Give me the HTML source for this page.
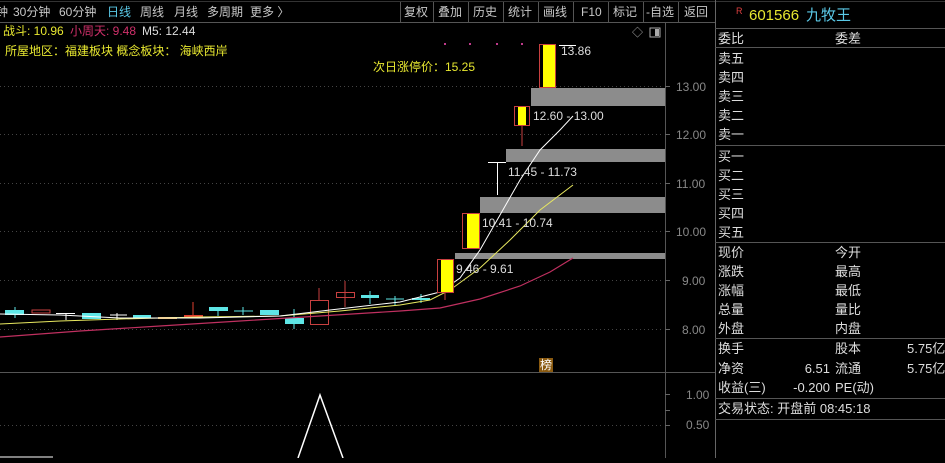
<!DOCTYPE html><html><head><meta charset="utf-8"><style>
body{margin:0;background:#000;width:945px;height:458px;overflow:hidden;font-family:"Liberation Sans","Noto Sans CJK SC",sans-serif;}
svg text{font-family:"Liberation Sans","Noto Sans CJK SC",sans-serif;}
</style></head><body>
<svg width="945" height="458" viewBox="0 0 945 458" xmlns="http://www.w3.org/2000/svg">
<rect width="945" height="458" fill="#000"/>
<g font-size="12" fill="#c8c8c8">
<text x="-4" y="16">钟</text><text x="13" y="16">30分钟</text><text x="59" y="16">60分钟</text>
<text x="107" y="16" fill="#5ac8e6">日线</text><text x="140" y="16">周线</text><text x="174" y="16">月线</text><text x="207" y="16">多周期</text><text x="250" y="16">更多 〉</text>
<text x="404" y="16">复权</text><text x="438" y="16">叠加</text><text x="473" y="16">历史</text><text x="508" y="16">统计</text><text x="543" y="16">画线</text><text x="581" y="16">F10</text><text x="613" y="16">标记</text><text x="646" y="16">-自选</text><text x="684" y="16">返回</text>
</g>
<g stroke="#555" stroke-width="1">
<line x1="400.5" y1="2" x2="400.5" y2="22"/><line x1="433.5" y1="2" x2="433.5" y2="22"/><line x1="468.5" y1="2" x2="468.5" y2="22"/><line x1="503.5" y1="2" x2="503.5" y2="22"/><line x1="538.5" y1="2" x2="538.5" y2="22"/><line x1="573.5" y1="2" x2="573.5" y2="22"/><line x1="608.5" y1="2" x2="608.5" y2="22"/><line x1="643.5" y1="2" x2="643.5" y2="22"/><line x1="678.5" y1="2" x2="678.5" y2="22"/>
<line x1="0" y1="1.5" x2="945" y2="1.5" stroke="#333"/>
<line x1="0" y1="22.5" x2="715" y2="22.5"/>
<line x1="665.5" y1="22" x2="665.5" y2="458"/>
<line x1="715.5" y1="0" x2="715.5" y2="458" stroke="#666"/>
<line x1="0" y1="372.5" x2="715" y2="372.5"/>
</g>
<text x="3" y="35" font-size="12" fill="#e8e830">战斗: 10.96</text>
<text x="70" y="35" font-size="12" fill="#d0306a">小周天: 9.48</text>
<text x="142" y="35" font-size="12" fill="#ddd">M5: 12.44</text>
<text x="5" y="55" font-size="12" fill="#e8e830">所屋地区：福建板块   概念板块：  海峡西岸</text>
<text x="373" y="71" font-size="12" fill="#e8e830">次日涨停价：15.25</text>
<text x="632" y="36" font-size="11" fill="#aaa">◇</text>
<rect x="650" y="28" width="10" height="9" fill="none" stroke="#aaa"/><rect x="655" y="29" width="4" height="7" fill="#aaa"/>
<g fill="#c03a8a"><rect x="444" y="43" width="2" height="2"/><rect x="469" y="43" width="2" height="2"/><rect x="496" y="43" width="2" height="2"/><rect x="521" y="43" width="2" height="2"/></g>
<g stroke="#444" stroke-dasharray="1,3">
<line x1="0" y1="86.5" x2="663" y2="86.5"/><line x1="0" y1="134.5" x2="663" y2="134.5"/><line x1="0" y1="183.5" x2="663" y2="183.5"/><line x1="0" y1="231.5" x2="663" y2="231.5"/><line x1="0" y1="280.5" x2="663" y2="280.5"/><line x1="0" y1="329.5" x2="663" y2="329.5"/><line x1="0" y1="425.5" x2="663" y2="425.5"/>
</g>
<g stroke="#666"><line x1="665" y1="86.5" x2="670" y2="86.5"/><line x1="665" y1="134.5" x2="670" y2="134.5"/><line x1="665" y1="183.5" x2="670" y2="183.5"/><line x1="665" y1="231.5" x2="670" y2="231.5"/><line x1="665" y1="280.5" x2="670" y2="280.5"/><line x1="665" y1="329.5" x2="670" y2="329.5"/><line x1="665" y1="394.5" x2="670" y2="394.5"/><line x1="665" y1="410.5" x2="670" y2="410.5"/><line x1="665" y1="425.5" x2="670" y2="425.5"/></g>
<g font-size="12" fill="#888">
<text x="676" y="91">13.00</text><text x="676" y="139">12.00</text><text x="676" y="188">11.00</text><text x="676" y="236">10.00</text><text x="682" y="285">9.00</text><text x="682" y="334">8.00</text><text x="686" y="399">1.00</text><text x="686" y="429">0.50</text>
</g>
<g fill="#8c8c8c"><rect x="531" y="88" width="134" height="18"/><rect x="506" y="149" width="159" height="13"/><rect x="480" y="197" width="185" height="16"/><rect x="455" y="253" width="210" height="6"/></g>
<g>
<rect x="5" y="310" width="19" height="5" fill="#5ee6e6"/><line x1="15" y1="307" x2="15" y2="318" stroke="#5ee6e6"/>
<rect x="32" y="310" width="18" height="3" fill="none" stroke="#c84040"/>
<rect x="56" y="313" width="19" height="1" fill="#fff"/><line x1="66" y1="313" x2="66" y2="320" stroke="#fff"/>
<rect x="82" y="313" width="19" height="6" fill="#5ee6e6"/>
<line x1="110" y1="315" x2="127" y2="315" stroke="#fff"/><line x1="117" y1="313" x2="117" y2="320" stroke="#fff"/>
<rect x="133" y="315" width="18" height="3" fill="#5ee6e6"/>
<rect x="158" y="317" width="19" height="2" fill="#e0a030"/>
<rect x="184" y="315" width="19" height="2" fill="#e04030"/><line x1="193" y1="302" x2="193" y2="315" stroke="#e04030"/>
<rect x="209" y="307" width="19" height="4" fill="#5ee6e6"/><line x1="218" y1="311" x2="218" y2="316" stroke="#5ee6e6"/>
<line x1="234" y1="311" x2="253" y2="311" stroke="#5ee6e6"/><line x1="243" y1="307" x2="243" y2="315" stroke="#5ee6e6"/>
<rect x="260" y="310" width="19" height="5" fill="#5ee6e6"/>
<rect x="285" y="318" width="19" height="6" fill="#5ee6e6"/><line x1="294" y1="309" x2="294" y2="329" stroke="#5ee6e6"/>
<rect x="310.5" y="300.5" width="18" height="24" fill="none" stroke="#c84040"/><line x1="319" y1="288" x2="319" y2="300" stroke="#c84040"/>
<rect x="336.5" y="292.5" width="18" height="5" fill="none" stroke="#c84040"/><line x1="345" y1="281" x2="345" y2="307" stroke="#c84040"/>
<rect x="361" y="295" width="18" height="3" fill="#5ee6e6"/><line x1="370" y1="291" x2="370" y2="304" stroke="#5ee6e6"/>
<line x1="386" y1="299" x2="404" y2="299" stroke="#5ee6e6"/><line x1="395" y1="296" x2="395" y2="305" stroke="#5ee6e6"/>
<rect x="412" y="298" width="18" height="2" fill="#5ee6e6"/><line x1="421" y1="294" x2="421" y2="303" stroke="#5ee6e6"/>
</g>
<polyline fill="none" stroke="#c03060" stroke-width="1.2" points="0,337 80,331 160,326 240,321 320,316 400,311 440,308 480,299 520,286 550,272 573,258"/>
<polyline fill="none" stroke="#e8e860" stroke-width="1" points="0,324 60,321 120,319 200,317 280,316 340,311 400,305 430,300 450,290 480,268 510,240 540,210 573,185"/>
<polyline fill="none" stroke="#fff" stroke-width="1" points="0,314 60,315 120,318 200,318 280,316 330,310 400,302 440,292 460,278 480,250 500,215 520,180 540,150 560,130 573,116"/>
<rect x="437.5" y="259.5" width="16" height="33" fill="#000" stroke="#c84040"/><rect x="441" y="260" width="12" height="32" fill="#ff0"/><line x1="445" y1="293" x2="445" y2="300" stroke="#c84040"/>
<rect x="462.5" y="213.5" width="17" height="35" fill="#000" stroke="#c84040"/><rect x="467" y="214" width="12" height="34" fill="#ff0"/>
<line x1="488" y1="162.5" x2="506" y2="162.5" stroke="#fff"/><line x1="497.5" y1="162" x2="497.5" y2="195" stroke="#fff"/>
<rect x="514.5" y="106.5" width="15" height="19" fill="#000" stroke="#c84040"/><rect x="518" y="107" width="8" height="18" fill="#ff0"/><line x1="522" y1="126" x2="522" y2="146" stroke="#c84040"/>
<rect x="539.5" y="44.5" width="16" height="43" fill="#000" stroke="#c84040"/><rect x="543" y="45" width="12" height="42" fill="#ff0"/>
<line x1="559" y1="45.5" x2="576" y2="45.5" stroke="#fff"/>
<g font-size="12" fill="#ddd">
<text x="561" y="55">13.86</text><text x="533" y="120">12.60 - 13.00</text><text x="508" y="176">11.45 - 11.73</text><text x="482" y="227">10.41 - 10.74</text><text x="456" y="273">9.46 - 9.61</text>
</g>
<rect x="539" y="358" width="14" height="14" fill="#8a5a10"/><text x="540" y="369" font-size="12" fill="#fff">榜</text>
<polyline fill="none" stroke="#fff" stroke-width="1.5" points="298,458 320,395 343,458"/>
<line x1="0" y1="457" x2="53" y2="457" stroke="#fff"/>
<text x="736" y="14" font-size="9" fill="#e04040">R</text>
<text x="749" y="20" font-size="15" fill="#e8e830">601566</text><text x="806" y="20" font-size="15" fill="#5ac8e6">九牧王</text>
<g stroke="#555"><line x1="715" y1="28.5" x2="945" y2="28.5"/><line x1="715" y1="47.5" x2="945" y2="47.5"/><line x1="715" y1="145.5" x2="945" y2="145.5"/><line x1="715" y1="242.5" x2="945" y2="242.5"/><line x1="715" y1="338.5" x2="945" y2="338.5"/><line x1="715" y1="398.5" x2="945" y2="398.5"/><line x1="715" y1="419.5" x2="945" y2="419.5"/></g>
<g font-size="13" fill="#ddd">
<text x="718" y="43">委比</text><text x="835" y="43">委差</text>
<text x="718" y="63">卖五</text><text x="718" y="82">卖四</text><text x="718" y="101">卖三</text><text x="718" y="120">卖二</text><text x="718" y="139">卖一</text>
<text x="718" y="161">买一</text><text x="718" y="180">买二</text><text x="718" y="199">买三</text><text x="718" y="218">买四</text><text x="718" y="237">买五</text>
<text x="718" y="257">现价</text><text x="835" y="257">今开</text>
<text x="718" y="276">涨跌</text><text x="835" y="276">最高</text>
<text x="718" y="295">涨幅</text><text x="835" y="295">最低</text>
<text x="718" y="314">总量</text><text x="835" y="314">量比</text>
<text x="718" y="333">外盘</text><text x="835" y="333">内盘</text>
<text x="718" y="353">换手</text><text x="835" y="353">股本</text><text x="907" y="353">5.75亿</text>
<text x="718" y="373">净资</text><text x="830" y="373" text-anchor="end">6.51</text><text x="835" y="373">流通</text><text x="907" y="373">5.75亿</text>
<text x="718" y="392">收益(三)</text><text x="830" y="392" text-anchor="end">-0.200</text><text x="835" y="392">PE(动)</text>
<text x="718" y="413">交易状态: 开盘前 08:45:18</text>
</g>
</svg>
</body></html>
